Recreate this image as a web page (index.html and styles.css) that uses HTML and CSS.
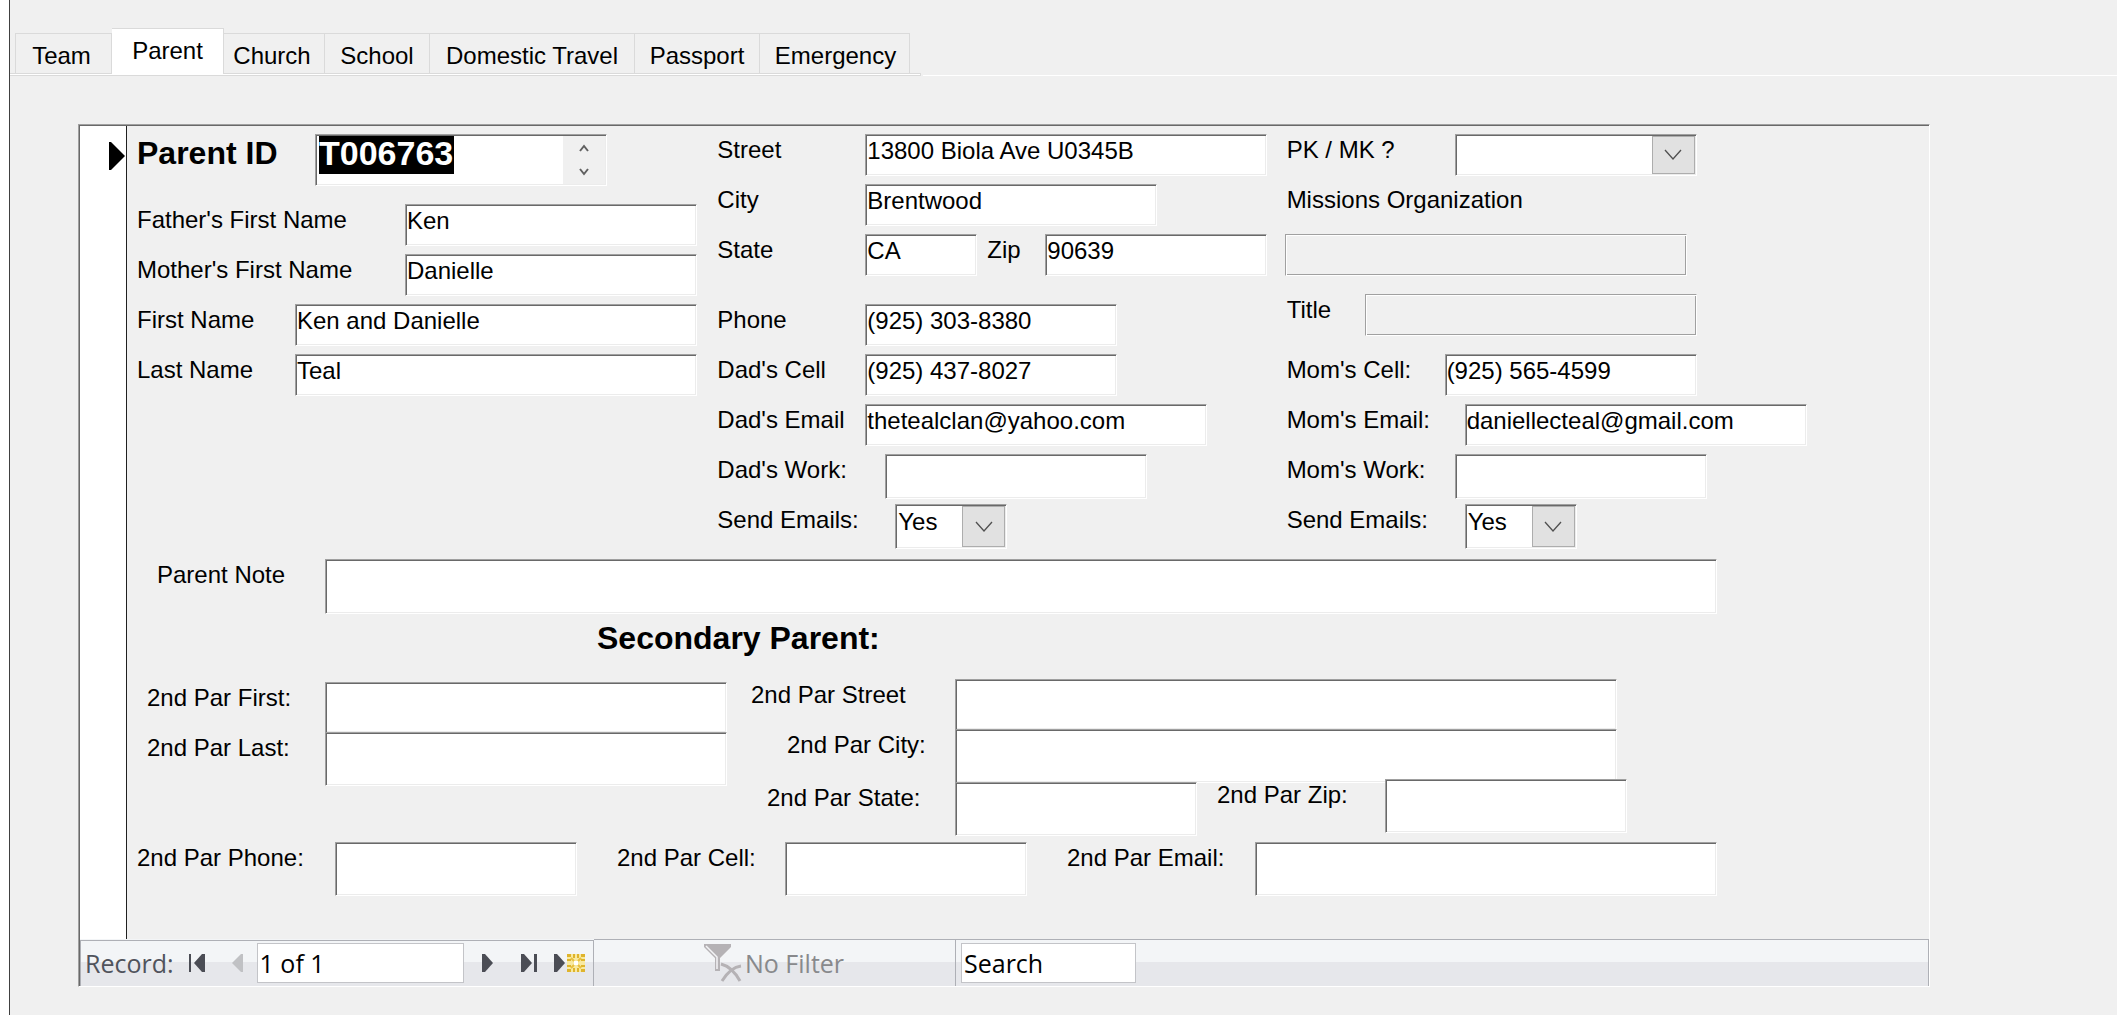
FILE: index.html
```
<!DOCTYPE html>
<html lang="en">
<head>
<meta charset="utf-8">
<title>Parent</title>
<link rel="stylesheet" href="styles.css">
</head>
<body>
<main class="form-window">
  <div class="tab-strip">
    <div class="tabs" role="tablist">
      <button class="tab tab-team" role="tab">Team</button>
      <button class="tab tab-parent active" role="tab" aria-selected="true">Parent</button>
      <button class="tab tab-church" role="tab">Church</button>
      <button class="tab tab-school" role="tab">School</button>
      <button class="tab tab-travel" role="tab">Domestic Travel</button>
      <button class="tab tab-passport" role="tab">Passport</button>
      <button class="tab tab-emergency" role="tab">Emergency</button>
    </div>
    <div class="strip-rest"></div>
  </div>

  <section class="subform">
    <div class="record">
      <button class="selector" aria-label="Select record">
        <svg width="16" height="28" viewBox="0 0 16 28"><path d="M0 0h2l14 14L2 28H0z" fill="#000"/></svg>
      </button>
      <form class="fields">
        <div class="primary">
          <div class="column">
            <div class="row row-id">
              <label class="label-id" for="pid">Parent ID</label>
              <div class="spin-field">
                <input id="pid" class="selected-value" value="T006763">
                <div class="spinner">
                  <button type="button" aria-label="Previous"><svg width="10" height="8" viewBox="0 0 10 8"><path d="M1 7l4-5 4 5" fill="none" stroke="#606060" stroke-width="2"/></svg></button>
                  <button type="button" aria-label="Next"><svg width="10" height="8" viewBox="0 0 10 8"><path d="M1 1l4 5 4-5" fill="none" stroke="#606060" stroke-width="2"/></svg></button>
                </div>
              </div>
            </div>
            <div class="row"><label class="w268" for="father">Father's First Name</label><input id="father" class="box grow" value="Ken"></div>
            <div class="row"><label class="w268" for="mother">Mother's First Name</label><input id="mother" class="box grow" value="Danielle"></div>
            <div class="row"><label class="w158" for="first">First Name</label><input id="first" class="box grow" value="Ken and Danielle"></div>
            <div class="row"><label class="w158" for="last">Last Name</label><input id="last" class="box grow" value="Teal"></div>
          </div>

          <div class="column">
            <div class="row"><label class="w148" for="street">Street</label><input id="street" class="box grow" value="13800 Biola Ave U0345B"></div>
            <div class="row"><label class="w148" for="city">City</label><input id="city" class="box b292" value="Brentwood"></div>
            <div class="row row-70"><label class="w148" for="state">State</label><input id="state" class="box b112" value="CA"><label class="w68 label-zip" for="zip">Zip</label><input id="zip" class="box grow" value="90639"></div>
            <div class="row"><label class="w148" for="phone">Phone</label><input id="phone" class="box b252" value="(925) 303-8380"></div>
            <div class="row"><label class="w148" for="dcell">Dad's Cell</label><input id="dcell" class="box b252" value="(925) 437-8027"></div>
            <div class="row"><label class="w148" for="demail">Dad's Email</label><input id="demail" class="box b342" value="thetealclan@yahoo.com"></div>
            <div class="row"><label class="w168" for="dwork">Dad's Work:</label><input id="dwork" class="box b262 tall"></div>
            <div class="row"><label class="w178" for="dsend">Send Emails:</label>
              <div class="combo b112 tall"><select id="dsend"><option>Yes</option><option>No</option></select><span class="arrow"><svg width="18" height="12" viewBox="0 0 18 12"><path d="M1 1l8 9 8-9" fill="none" stroke="#505050" stroke-width="1.3"/></svg></span></div>
            </div>
          </div>

          <div class="column">
            <div class="row"><label class="w168" for="pk">PK / MK ?</label>
              <div class="combo b242"><select id="pk"><option></option><option>PK</option><option>MK</option></select><span class="arrow"><svg width="18" height="12" viewBox="0 0 18 12"><path d="M1 1l8 9 8-9" fill="none" stroke="#505050" stroke-width="1.3"/></svg></span></div>
            </div>
            <div class="row"><label for="org">Missions Organization</label></div>
            <div class="row row-60"><input id="org" class="box etched b402 outdent" disabled></div>
            <div class="row row-60"><label class="w78" for="title">Title</label><input id="title" class="box etched b332" disabled></div>
            <div class="row"><label class="w158" for="mcell">Mom's Cell:</label><input id="mcell" class="box b252" value="(925) 565-4599"></div>
            <div class="row"><label class="w178" for="memail">Mom's Email:</label><input id="memail" class="box b342" value="daniellecteal@gmail.com"></div>
            <div class="row"><label class="w168" for="mwork">Mom's Work:</label><input id="mwork" class="box b252 tall"></div>
            <div class="row"><label class="w178" for="msend">Send Emails:</label>
              <div class="combo b112 tall"><select id="msend"><option>Yes</option><option>No</option></select><span class="arrow"><svg width="18" height="12" viewBox="0 0 18 12"><path d="M1 1l8 9 8-9" fill="none" stroke="#505050" stroke-width="1.3"/></svg></span></div>
            </div>
          </div>
        </div>

        <div class="note"><label for="note">Parent Note</label><input id="note" class="box grow note-box"></div>

        <h2>Secondary Parent:</h2>

        <div class="secondary">
          <div class="second-name">
            <div class="row"><label class="w178" for="sfirst">2nd Par First:</label><input id="sfirst" class="box grow stacked"></div>
            <div class="row"><label class="w178" for="slast">2nd Par Last:</label><input id="slast" class="box grow deep"></div>
          </div>
          <div class="second-address">
            <div class="row pad-street"><label class="w204" for="sstreet">2nd Par Street</label><input id="sstreet" class="box grow stacked"></div>
            <div class="row pad-city"><label class="w168" for="scity">2nd Par City:</label><input id="scity" class="box grow deep"></div>
            <div class="state-zip"><label class="w188" for="sstate">2nd Par State:</label><input id="sstate" class="box b242 deep">
              <div class="zip"><label class="w168" for="szip">2nd Par Zip:</label><input id="szip" class="box b242 deep"></div>
            </div>
          </div>
        </div>

        <div class="contact">
          <label class="w198" for="sphone">2nd Par Phone:</label><input id="sphone" class="box b242 deep">
          <label class="w168 spaced" for="scell">2nd Par Cell:</label><input id="scell" class="box b242 deep">
          <label class="w188 spaced" for="semail">2nd Par Email:</label><input id="semail" class="box grow deep">
        </div>
      </form>
    </div>

    <footer class="navigator">
      <div class="nav-records">
        <label for="recno">Record:</label>
        <button class="nav-first" aria-label="First record"><svg width="16" height="18" viewBox="0 0 16 18"><path d="M0 0h2v18H0zM16 0v18h-3L5 9l8-9z" fill="#4b4d55"/></svg></button>
        <button class="nav-prev" aria-label="Previous record" disabled><svg width="11" height="18" viewBox="0 0 11 18"><path d="M11 0v18H9L0 9l9-9z" fill="#c0c1c4"/></svg></button>
        <input id="recno" class="nav-box recno" value="1 of 1">
        <button class="nav-next" aria-label="Next record"><svg width="11" height="18" viewBox="0 0 11 18"><path d="M0 0h3l8 9-8 9H0z" fill="#4b4d55"/></svg></button>
        <button class="nav-last" aria-label="Last record"><svg width="16" height="18" viewBox="0 0 16 18"><path d="M0 0h3l8 9-8 9H0zM13 0h3v18h-3z" fill="#4b4d55"/></svg></button>
        <button class="nav-new" aria-label="New record"><svg width="31" height="18" viewBox="0 0 31 18"><path d="M0 0h3l8 9-8 9H0z" fill="#4b4d55"/><path d="M13 0h18v18H13z" fill="#f8e9a0"/><path d="M13 0h4v3h-4zM19 0h2v4h-2zM23 0h2v4h-2zM27 0h4v3h-4zM13 5h4v2h-4zM27 5h4v2h-4zM13 11h4v2h-4zM27 11h4v2h-4zM13 15h4v3h-4zM19 14h2v4h-2zM23 14h2v4h-2zM27 15h4v3h-4z" fill="#dfb42c"/><path d="M17 4l3 3M27 4l-3 3M17 14l3-3M27 14l-3-3" stroke="#e8c040" stroke-width="2"/><path d="M20 7h4v4h-4z" fill="#fff"/></svg></button>
      </div>
      <div class="nav-rest">
        <button class="nav-filter" disabled><svg width="38" height="38" viewBox="0 0 38 38"><path d="M0 0h27v3L16 14v13h-5V14L0 3z" fill="#b5b2b5"/><path d="M2 2l11 11v12" fill="none" stroke="#f3f4f6" stroke-width="1.5"/><path d="M17 20c8 2 14 8 19 17M37 22c-8 1-14 7-19 15" fill="none" stroke="#b5b2b5" stroke-width="3"/></svg>No Filter</button>
        <div class="nav-search"><input class="nav-box search" aria-label="Search" value="Search"></div>
      </div>
    </footer>
  </section>
</main>
</body>
</html>
```
FILE: styles.css
```
* { box-sizing: border-box; }

body {
  margin: 0;
  background: #f0f0f0;
  color: #000;
  font: 24px/28px "Liberation Sans", Arial, sans-serif;
}

button, input, select {
  margin: 0;
  padding: 0;
  border: 0;
  border-radius: 0;
  background: none;
  color: inherit;
  font: inherit;
}

svg { display: block; }

.form-window {
  min-height: 100vh;
  border-left: 9px solid #fff;
  box-shadow: inset 1px 0 #404040;
  padding-top: 28px;
}

/* tabs */
.tab-strip {
  display: flex;
  align-items: flex-end;
  padding-left: 1px;
}
.tabs {
  display: flex;
  align-items: flex-end;
  width: 911px;
  height: 48px;
  padding: 0 0 3px 5px;
  background: linear-gradient(#dadada, #dadada) 0 45px / 100% 1px no-repeat,
    linear-gradient(#dadada, #dadada) 100% 46px / 1px 1px no-repeat,
    linear-gradient(#fff, #fff) 0 46px / 100% 1px no-repeat,
    linear-gradient(#dadada, #dadada) 0 47px / 100% 1px no-repeat;
}
.strip-rest { flex: 1; margin-left: 2px; border-bottom: 1px solid #fff; }
.tab {
  height: 40px;
  padding-top: 4px;
  border: 1px solid #dadada;
  border-width: 1px 1px 0 0;
}
.tab.active {
  height: 46px;
  margin-bottom: -1px;
  padding: 0 0 2px;
  background: #fff;
}
.tab-team { width: 97px; padding-right: 4px; border-left-width: 1px; }
.tab-parent { width: 112px; }
.tab-church { width: 101px; padding-right: 4px; }
.tab-school { width: 105px; }
.tab-travel { width: 205px; }
.tab-passport { width: 125px; }
.tab-emergency { width: 150px; padding-left: 2px; }

/* subform frame */
.subform {
  margin: 48px 187px 0 69px;
  border: 1px solid;
  border-color: #a0a0a0 #fff #fff #a0a0a0;
  box-shadow: inset 1px 1px #696969;
  padding: 1px 0 0 1px;
}
.record { display: flex; }
.selector {
  display: flex;
  justify-content: flex-end;
  width: 48px;
  padding: 16px 1px 0 0;
  border-right: 1px solid #202020;
  background: #fff;
}
.fields { flex: 1; padding: 8px 0 43px 10px; }

.primary {
  display: grid;
  grid-template-columns: minmax(0, 560fr) minmax(0, 549fr) minmax(0, 642fr);
  gap: 20px;
}
.row { display: flex; align-items: flex-start; height: 50px; }
.row-60 { height: 60px; }
.row-70, .row-id { height: 70px; }

label { flex: none; padding-top: 2px; white-space: nowrap; }
.w68 { width: 68px; }
.w78 { width: 78px; }
.w148 { width: 148px; }
.w158 { width: 158px; }
.w168 { width: 168px; }
.w178 { width: 178px; }
.w188 { width: 188px; }
.w198 { width: 198px; }
.w204 { width: 204px; }
.w268 { width: 268px; }
.label-zip { padding-left: 10px; }

.box, .combo, .spin-field {
  height: 42px;
  border: 1px solid;
  border-color: #a0a0a0 #fff #fff #a0a0a0;
  background: #fff;
  box-shadow: inset 1px 1px #696969, inset -1px -1px #ececec;
}
.box { min-width: 0; padding: 2px 0 10px 1px; }
.grow { flex: 1; }
.b112 { width: 112px; }
.b242 { width: 242px; }
.b252 { width: 252px; }
.b262 { width: 262px; }
.b292 { width: 292px; }
.b332 { width: 332px; }
.b342 { width: 342px; }
.b402 { width: 402px; }
.tall { height: 45px; }
.deep { height: 54px; }
.note-box { height: 55px; }
.stacked { height: 50px; border-bottom: 0; }
.outdent { margin-left: -2px; }
.etched {
  background: #f0f0f0;
  box-shadow: inset 1px 1px #fff, inset -1px -1px #a0a0a0;
}

.label-id {
  width: 178px;
  padding: 0;
  font-size: 32px;
  line-height: 38px;
  font-weight: bold;
}
.spin-field {
  display: flex;
  align-items: flex-start;
  justify-content: space-between;
  width: 292px;
  height: 52px;
  padding: 1px;
}
.selected-value {
  width: 135px;
  height: 38px;
  margin-left: 2px;
  padding-bottom: 4px;
  background: #000;
  color: #fff;
  font-size: 34px;
  line-height: 34px;
  font-weight: bold;
}
.spinner {
  display: flex;
  flex-direction: column;
  width: 42px;
  height: 48px;
  background: #f0f0f0;
}
.spinner button {
  display: flex;
  flex: 1;
  align-items: center;
  justify-content: center;
}

.combo { display: flex; padding: 1px; }
.combo select {
  flex: 1;
  min-width: 0;
  padding: 1px 0 10px 1px;
  appearance: none;
}
.arrow {
  display: flex;
  align-items: center;
  justify-content: center;
  width: 43px;
  border: 1px solid #adadad;
  background: #e1e1e1;
}

.note { display: flex; margin: 5px 212px 0 20px; }
.note label { width: 168px; }

h2 {
  margin: 6px 0 22px 460px;
  font-size: 32px;
  line-height: 37px;
}

.secondary { display: flex; }
.second-name { width: 590px; padding: 3px 0 0 10px; }
.second-address { flex: 1; padding-left: 24px; padding-right: 302px; }
.second-address .row { margin-right: 10px; }
.pad-city { padding-left: 36px; }
.state-zip { display: flex; margin-top: 3px; padding-left: 16px; }
.zip { display: flex; margin: -3px 0 0 20px; }

.contact { display: flex; margin: 6px 212px 0 0; }
.spaced { margin-left: 40px; }

/* record navigator */
.navigator {
  display: flex;
  height: 47px;
  background: linear-gradient(#f3f5f7 50%, #e6e7eb 50%);
  color: #50535c;
  font: 25px/36px "Open Sans", "Noto Sans", sans-serif;
}
.navigator label { padding: 0 15px 0 4px; }
.nav-records {
  display: flex;
  align-items: center;
  width: 514px;
  margin-top: 1px;
  padding-bottom: 1px;
  border: 1px solid #aeb0b6;
  border-bottom: 0;
}
.nav-rest {
  display: flex;
  flex: 1;
  align-items: center;
  border: 1px solid #aeb0b6;
  border-width: 1px 1px 0 0;
}
.nav-box {
  height: 40px;
  padding: 0 0 0 2px;
  border: 1px solid #c3c4c8;
  background: #fff;
  color: #000;
}
.recno { width: 207px; }
.nav-prev { margin: 0 14px 0 27px; }
.nav-next { margin-left: 18px; }
.nav-last { margin-left: 28px; }
.nav-new { margin-left: 17px; }
.nav-filter {
  display: flex;
  align-items: center;
  gap: 3px;
  width: 362px;
  height: 46px;
  padding-left: 110px;
  border-right: 1px solid #aeb0b6;
  color: #88898c;
}
.nav-search { padding-left: 5px; }
.search { width: 175px; }
```
